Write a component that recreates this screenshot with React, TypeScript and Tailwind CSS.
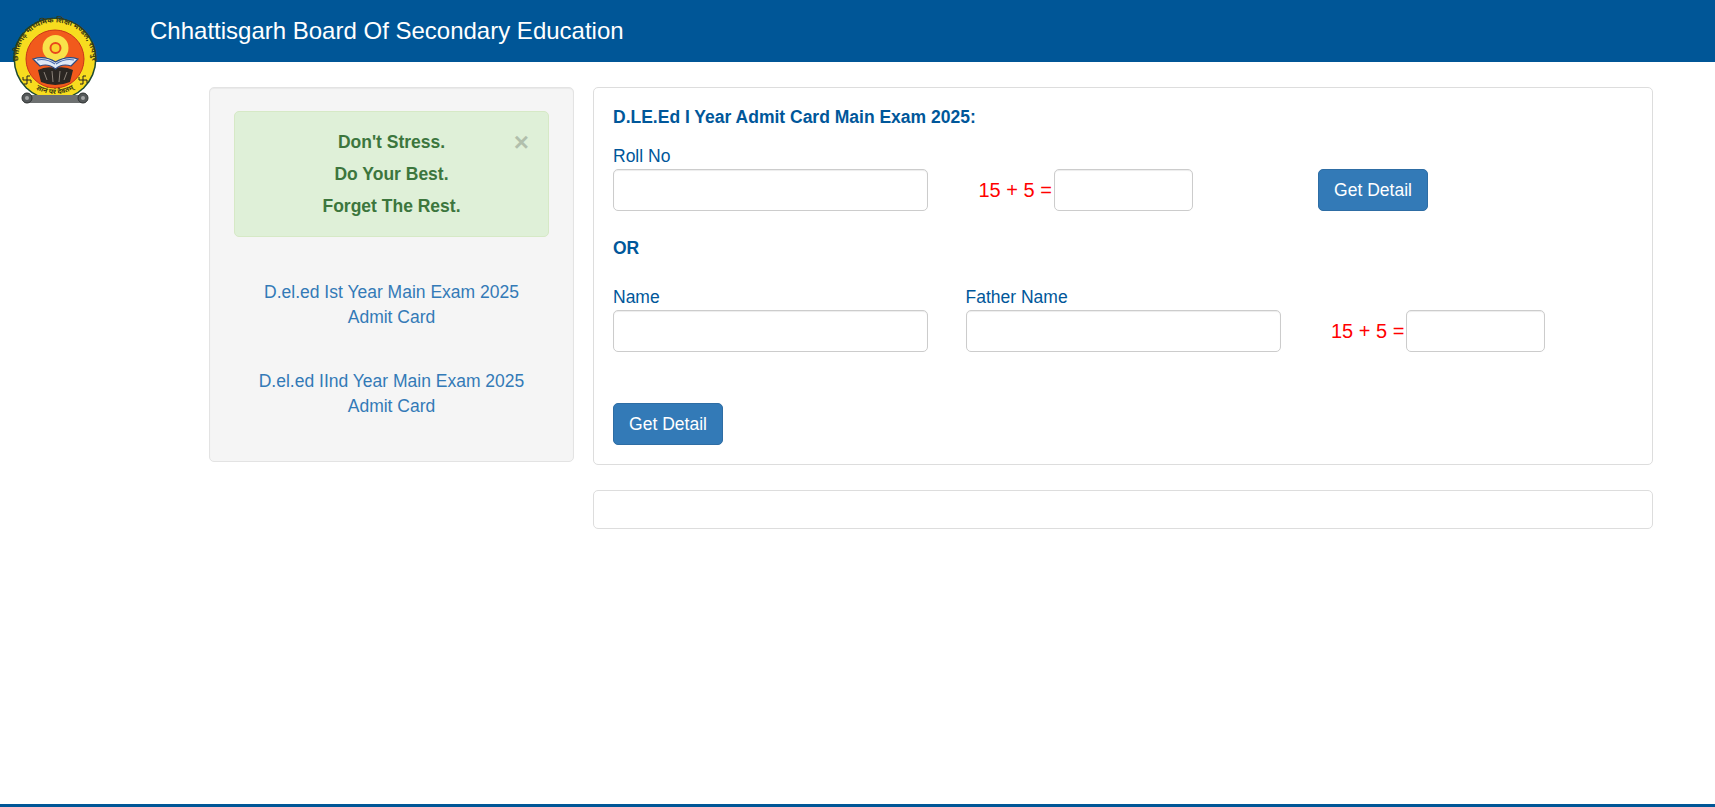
function Logo() {
  return (
    <svg viewBox="0 0 110 110" className="absolute left-0 top-0 h-[110px] w-[110px]">
      <defs>
        <path id="seal-top" d="M 19 68 A 37 37 0 1 1 91 68" />
        <path id="seal-bottom" d="M 30 84 A 36 36 0 0 0 80 84" />
      </defs>
      <circle cx="55" cy="59" r="41.5" fill="#1e4a32" />
      <circle cx="55" cy="59" r="40" fill="#f7dc1f" />
      <circle cx="55" cy="59" r="29" fill="#f15a1c" stroke="#c9341a" strokeWidth="1" />
      <circle cx="55.5" cy="48" r="13" fill="#f9e24a" />
      <circle cx="55.5" cy="48" r="5" fill="#f9d52f" stroke="#e8481c" strokeWidth="2" />
      <path d="M38 70 Q46 66 55 68 Q65 66 73 70 L70 82 Q55 88 41 82 Z" fill="#2b2622" />
      <path d="M44 72 L47 80 M52 71 L53 82 M60 71 L59 82 M67 72 L64 80" stroke="#8a8178" strokeWidth="1" />
      <path d="M33 59 Q45 55 55.5 62 Q67 55 78 59 L71 66 Q62 63 55.5 69 Q48 63 40 66 Z" fill="#dfe8f4" stroke="#2e4a80" strokeWidth="1.2" />
      <path d="M37 60 Q46 58 55 64 M74 60 Q65 58 56 64" fill="none" stroke="#4a6db0" strokeWidth="1.2" />
      <text fontSize="7.5" fontWeight="700" fill="#3b3a12" fontFamily="'Noto Sans', sans-serif">
        <textPath href="#seal-top" startOffset="50%" textAnchor="middle">
          छत्तीसगढ़ माध्यमिक शिक्षा मण्डल, रायपुर
        </textPath>
      </text>
      <text fontSize="7" fontWeight="700" fill="#3b3a12" fontFamily="'Noto Sans', sans-serif">
        <textPath href="#seal-bottom" startOffset="50%" textAnchor="middle">
          ज्ञानं परं दैवतम्
        </textPath>
      </text>
      <path d="M27 76v8M23 80h8M27 76h3M27 84h-3M23 80v-3M31 80v3" stroke="#222" strokeWidth="1" fill="none" />
      <path d="M83 76v8M79 80h8M83 76h3M83 84h-3M79 80v-3M87 80v3" stroke="#222" strokeWidth="1" fill="none" />
      <rect x="24" y="95" width="62" height="8" rx="2" fill="#6d7070" />
      <circle cx="27" cy="98" r="5" fill="#55595a" stroke="#2f3333" strokeWidth="1" />
      <circle cx="27" cy="98" r="2" fill="#a3a6a6" />
      <circle cx="83" cy="98" r="5" fill="#55595a" stroke="#2f3333" strokeWidth="1" />
      <circle cx="83" cy="98" r="2" fill="#a3a6a6" />
    </svg>
  );
}

function TextField({ className = '' }: { className?: string }) {
  return (
    <input
      type="text"
      className={`h-[42px] rounded-[5px] border border-[#ccc] bg-white shadow-[inset_0_1px_1px_rgba(0,0,0,0.075)] ${className}`}
    />
  );
}

function Captcha() {
  return (
    <div className="flex items-center pl-[13px]">
      <span className="w-[75px] text-[20px] leading-[28px] text-[#f00] whitespace-nowrap">15 + 5 =</span>
      <TextField className="w-[139px]" />
    </div>
  );
}

function SubmitButton() {
  return (
    <button
      type="button"
      className="h-[42px] w-[110px] rounded-[5px] border border-[#2e6da4] bg-[#337ab7] text-[17.5px] text-white"
    >
      Get Detail
    </button>
  );
}

function AdmitLink({ title }: { title: string }) {
  return (
    <a href="#" className="block text-center text-[17.5px] leading-[25px] text-[#337ab7]">
      {title}
      <br />
      Admit Card
    </a>
  );
}

export default function App() {
  return (
    <div className="relative flex h-[807px] flex-col overflow-hidden bg-white font-['Liberation_Sans',Arial,sans-serif] text-[#00579a]">
      <header className="flex h-[62px] items-center bg-[#005697] pl-[150px]">
        <h1 className="text-[24px] leading-[60px] text-white">Chhattisgarh Board Of Secondary Education</h1>
      </header>
      <Logo />

      <main className="ml-[209px] mr-[62px] mt-[25px] flex items-start gap-[19px]">
        <aside className="w-[365px] shrink-0 rounded-[5px] border border-[#e3e3e3] bg-[#f5f5f5] px-[24px] pb-[42px] pt-[23px] shadow-[inset_0_1px_1px_rgba(0,0,0,0.05)]">
          <div className="relative rounded-[5px] border border-[#d6e9c6] bg-[#dff0d8] py-[14px] text-center text-[17.5px] font-bold leading-[32px] text-[#3c763d]">
            <p>Don&apos;t Stress.</p>
            <p>Do Your Best.</p>
            <p>Forget The Rest.</p>
            <span className="absolute right-[19px] top-[14px] text-[26px] leading-[32px] text-black opacity-20">×</span>
          </div>
          <div className="mt-[43px] flex flex-col gap-[39px]">
            <AdmitLink title="D.el.ed Ist Year Main Exam 2025" />
            <AdmitLink title="D.el.ed IInd Year Main Exam 2025" />
          </div>
        </aside>

        <section className="flex min-w-0 flex-1 flex-col gap-[25px]">
          <div className="rounded-[5px] border border-[#ddd] bg-white px-[19px] pb-[19px] pt-[19px]">
            <h2 className="text-[17.5px] font-bold leading-[20px]">D.LE.Ed I Year Admit Card Main Exam 2025:</h2>

            <div className="mt-[17px] grid grid-cols-3 gap-x-[37.5px]">
              <div>
                <label className="block text-[17.5px] leading-[25px]">Roll No</label>
                <TextField className="w-full" />
              </div>
              <div className="flex flex-col justify-end">
                <Captcha />
              </div>
              <div className="flex items-end">
                <SubmitButton />
              </div>
            </div>

            <p className="mt-[27px] text-[17.5px] font-bold leading-[20px]">OR</p>

            <div className="mt-[27px] grid grid-cols-3 gap-x-[37.5px]">
              <div>
                <label className="block text-[17.5px] leading-[25px]">Name</label>
                <TextField className="w-full" />
              </div>
              <div>
                <label className="block text-[17.5px] leading-[25px]">Father Name</label>
                <TextField className="w-full" />
              </div>
              <div className="flex flex-col justify-end">
                <Captcha />
              </div>
            </div>

            <div className="mt-[51px] flex">
              <SubmitButton />
            </div>
          </div>
          <div className="h-[39px] rounded-[5px] border border-[#ddd] bg-white" />
        </section>
      </main>

      <footer className="mt-auto h-[3px] bg-[#005697]" />
    </div>
  );
}
